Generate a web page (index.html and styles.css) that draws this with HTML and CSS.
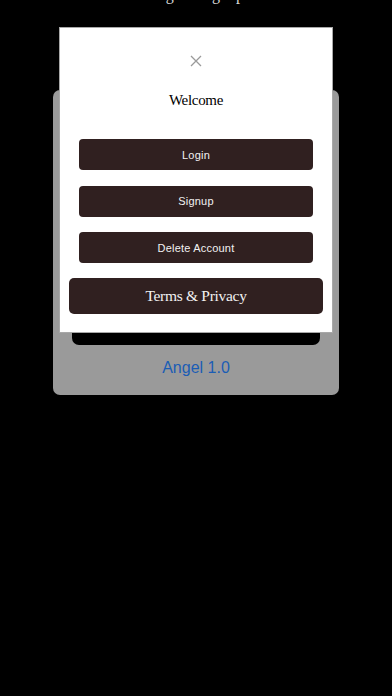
FILE: index.html
```html
<!DOCTYPE html>
<html lang="en">
<head>
    <meta charset="UTF-8">
    <meta name="viewport" content="width=device-width, initial-scale=1.0">
    <title>Angel</title>
    <link rel="stylesheet" href="styles.css">
</head>
<body>
    <h1 class="page-title">Login / Signup</h1>

    <!-- Card behind the popup -->
    <div class="card">
        <div class="card-screen"></div>
        <div class="version">Angel 1.0</div>
    </div>

    <!-- Popup -->
    <div class="modal">
        <button class="close" aria-label="Close">
            <svg width="12" height="12" viewBox="0 0 12 12">
                <path d="M1 1 L11 11 M11 1 L1 11" stroke="#9a9a9a" stroke-width="1.3" fill="none"/>
            </svg>
        </button>
        <h2 class="welcome">Welcome</h2>
        <div class="actions">
            <button class="btn">Login</button>
            <button class="btn">Signup</button>
            <button class="btn">Delete Account</button>
        </div>
        <button class="btn btn-terms">Terms &amp; Privacy</button>
    </div>
</body>
</html>
```

FILE: styles.css
```css
body {
    margin: 0;
    background-color: #000;
    font-family: "Liberation Sans", Arial, sans-serif;
    height: 696px;
    overflow: hidden;
    position: relative;
}

.page-title {
    margin: -13px 0 0;
    font-family: "Liberation Serif", "Times New Roman", serif;
    font-weight: normal;
    font-size: 16px;
    line-height: 16px;
    color: #d8d8d8;
    text-align: center;
}

.card {
    margin: 87px 53px 0;
    padding: 20px 19px 17px;
    background-color: #9a9a9a;
    border-radius: 7px;
}

.card-screen {
    height: 235px;
    background-color: #000;
    border-radius: 7px;
}

.version {
    margin-top: 13px;
    font-size: 16px;
    line-height: 20px;
    color: #1a5db5;
    text-align: center;
}

.modal {
    position: absolute;
    left: 59px;
    top: 27px;
    width: 274px;
    box-sizing: border-box;
    padding: 27px 9px 18px;
    background-color: #fff;
    border: 1px solid #a8a8a8;
    display: flex;
    flex-direction: column;
}

.close {
    display: block;
    margin: 0 auto;
    padding: 0;
    border: none;
    background: none;
    width: 12px;
    height: 12px;
    line-height: 0;
}

.welcome {
    margin: 23px 0 0;
    font-family: "Liberation Serif", "Times New Roman", serif;
    font-weight: normal;
    font-size: 15px;
    letter-spacing: -0.3px;
    line-height: 20px;
    color: #000;
    text-align: center;
}

.actions {
    margin: 29px 10px 0;
    display: flex;
    flex-direction: column;
    gap: 15.5px;
}

.btn {
    display: block;
    width: 100%;
    height: 31px;
    border: none;
    border-radius: 4px;
    background-color: #302020;
    color: #f2f2f2;
    font-family: "Liberation Sans", Arial, sans-serif;
    font-size: 11px;
    letter-spacing: 0.2px;
    cursor: pointer;
}

.btn-terms {
    margin-top: 15px;
    height: 36px;
    font-family: "Liberation Serif", "Times New Roman", serif;
    font-size: 15.5px;
    letter-spacing: -0.3px;
    border-radius: 5px;
}
```
